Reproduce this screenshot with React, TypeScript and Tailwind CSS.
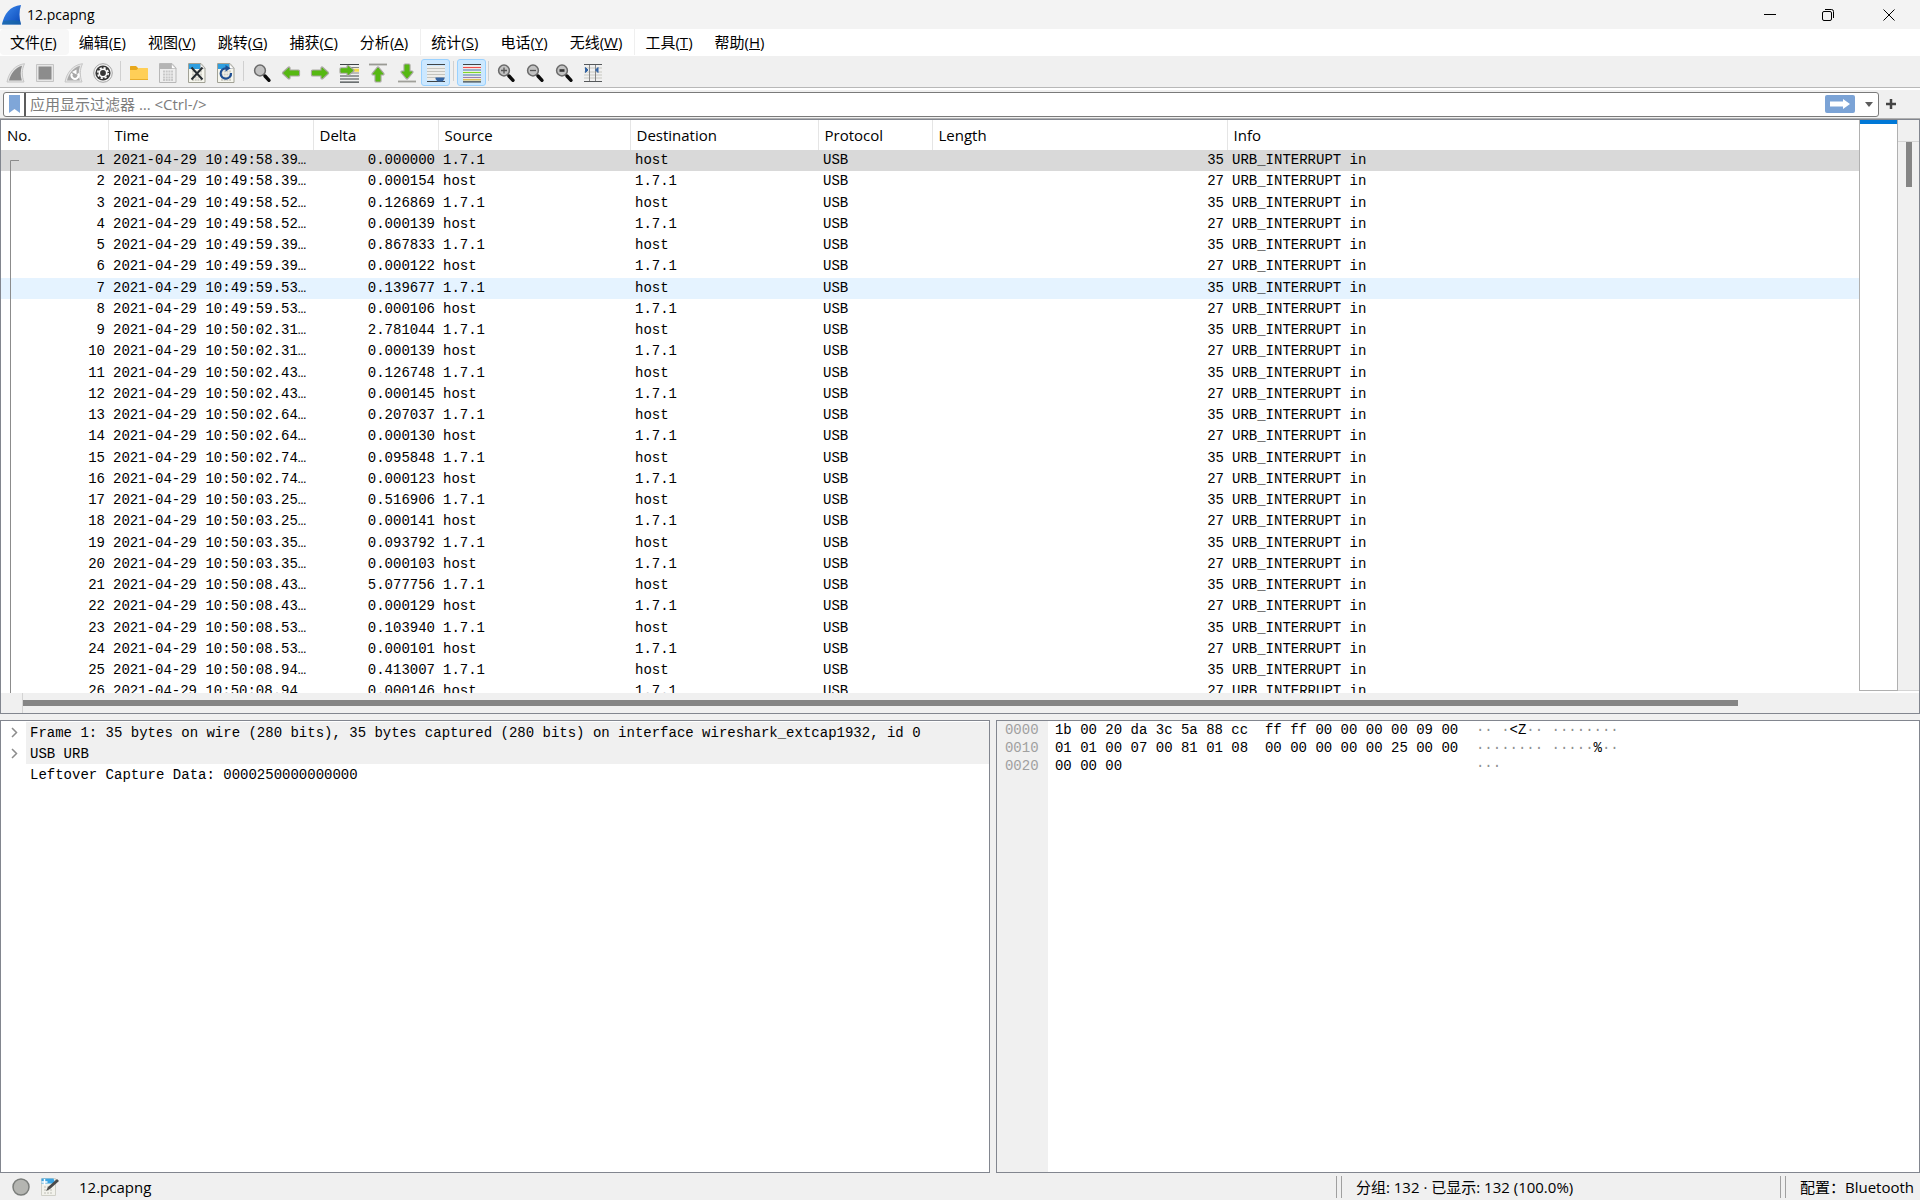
import type { ReactElement, ReactNode } from "react";

type Packet = {
  no: number;
  time: string;
  delta: string;
};

type HexLine = {
  offset: string;
  bytes: string;
  ascii: string;
};

const menuGroups: [string, string][][] = [
  [
    ["文件", "F"],
    ["编辑", "E"],
    ["视图", "V"],
    ["跳转", "G"],
    ["捕获", "C"],
    ["分析", "A"],
  ],
  [
    ["统计", "S"],
    ["电话", "Y"],
    ["无线", "W"],
  ],
  [
    ["工具", "T"],
    ["帮助", "H"],
  ],
];

const packets: Packet[] = [
  { no: 1, time: "10:49:58.39", delta: "0.000000" },
  { no: 2, time: "10:49:58.39", delta: "0.000154" },
  { no: 3, time: "10:49:58.52", delta: "0.126869" },
  { no: 4, time: "10:49:58.52", delta: "0.000139" },
  { no: 5, time: "10:49:59.39", delta: "0.867833" },
  { no: 6, time: "10:49:59.39", delta: "0.000122" },
  { no: 7, time: "10:49:59.53", delta: "0.139677" },
  { no: 8, time: "10:49:59.53", delta: "0.000106" },
  { no: 9, time: "10:50:02.31", delta: "2.781044" },
  { no: 10, time: "10:50:02.31", delta: "0.000139" },
  { no: 11, time: "10:50:02.43", delta: "0.126748" },
  { no: 12, time: "10:50:02.43", delta: "0.000145" },
  { no: 13, time: "10:50:02.64", delta: "0.207037" },
  { no: 14, time: "10:50:02.64", delta: "0.000130" },
  { no: 15, time: "10:50:02.74", delta: "0.095848" },
  { no: 16, time: "10:50:02.74", delta: "0.000123" },
  { no: 17, time: "10:50:03.25", delta: "0.516906" },
  { no: 18, time: "10:50:03.25", delta: "0.000141" },
  { no: 19, time: "10:50:03.35", delta: "0.093792" },
  { no: 20, time: "10:50:03.35", delta: "0.000103" },
  { no: 21, time: "10:50:08.43", delta: "5.077756" },
  { no: 22, time: "10:50:08.43", delta: "0.000129" },
  { no: 23, time: "10:50:08.53", delta: "0.103940" },
  { no: 24, time: "10:50:08.53", delta: "0.000101" },
  { no: 25, time: "10:50:08.94", delta: "0.413007" },
  { no: 26, time: "10:50:08.94", delta: "0.000146" },
];

const columns = ["No.", "Time", "Delta", "Source", "Destination", "Protocol", "Length", "Info"];

const hexLines: HexLine[] = [
  { offset: "0000", bytes: "1b 00 20 da 3c 5a 88 cc  ff ff 00 00 00 00 09 00", ascii: "·· ·<Z·· ········" },
  { offset: "0010", bytes: "01 01 00 07 00 81 01 08  00 00 00 00 00 25 00 00", ascii: "········ ·····%··" },
  { offset: "0020", bytes: "00 00 00", ascii: "···" },
];

function Icon({ children }: { children: ReactNode }): ReactElement {
  return (
    <svg width="20" height="20" viewBox="0 0 20 20" fill="none" aria-hidden="true">
      {children}
    </svg>
  );
}

function Magnifier({ children }: { children?: ReactNode }): ReactElement {
  return (
    <Icon>
      <path d="M11.500 11.500l2 2" stroke="#555" strokeWidth="2" />
      <path d="M13 13l4 4.300" stroke="#0c0c0c" strokeWidth="3.400" strokeLinecap="round" />
      <circle cx="8" cy="7.500" r="5.400" fill="#c2c2c2" stroke="#6a6a6a" strokeWidth="1.500" />
      {children}
    </Icon>
  );
}

function Page({ grey, children }: { grey?: boolean; children?: ReactNode }): ReactElement {
  return (
    <Icon>
      <path d="M1.500.500h12.500l4 4.500v14.500H1.500z" fill={grey ? "#eeeeee" : "#f6f6ee"} stroke={grey ? "#b8b8b8" : "#a2a296"} />
      <path d="M2 1h11.500l1 5H2z" fill={grey ? "#b4b4b4" : "#2f9fe0"} />
      <path d="M13.500 1v4.500h4.500z" fill="#fff" stroke="#aaa" strokeWidth=".6" />
      <path
        d="M5 8.500h10M5 11.500h10M5 14.500h10M5 17h10"
        stroke={grey ? "#c8c8c8" : "#cfcfc6"}
        strokeWidth="2"
        strokeDasharray="2 .7"
      />
      {children}
    </Icon>
  );
}

function ArrowShape({ d }: { d: string }): ReactElement {
  return (
    <>
      <path d={d} fill="#fff" stroke="#a8a8a0" strokeWidth="3.200" strokeLinejoin="round" />
      <path d={d} fill="#56b812" stroke="#56b812" strokeWidth="1" />
    </>
  );
}

const icons: Record<string, ReactElement> = {
  start: (
    <Icon>
      <path d="M1 19C3 9 9 2 18.500.700c-2.800 6-2.800 12-.5 18.300z" fill="#e6e6e6" stroke="#c6c6c6" />
      <path d="M3 17.500C5 10 9.500 4.500 16 2.800c-1.700 5-1.700 10-.2 14.700z" fill="#8a8a8a" />
    </Icon>
  ),
  stop: (
    <Icon>
      <path d="M1.500 1.500h17v17h-17z" fill="#e6e6e6" stroke="#c4c4c4" />
      <path d="M3.500 3.500h13v13h-13z" fill="#8c8c8c" />
    </Icon>
  ),
  restart: (
    <Icon>
      <path d="M1 19C3 9 9 2 18.500.700c-2.800 6-2.800 12-.5 18.300z" fill="#e6e6e6" stroke="#c6c6c6" />
      <path d="M3 17.500C5 10 9.500 4.500 16 2.800c-1.700 5-1.700 10-.2 14.700z" fill="#a8a8a8" />
      <path d="M8 10.500a3.500 3.500 0 1 0 6 0" stroke="#fff" strokeWidth="2" />
      <path d="M12.500 6.500v5L8 9z" fill="#fff" />
    </Icon>
  ),
  options: (
    <Icon>
      <circle cx="10" cy="10" r="9.300" fill="#f4f4f4" stroke="#a4a4a4" />
      <circle cx="10" cy="10" r="7.600" fill="#363636" />
      <circle cx="10" cy="10" r="5.200" stroke="#fff" strokeWidth="1.600" strokeDasharray="2.200 1.880" />
      <circle cx="10" cy="10" r="3.700" stroke="#fff" strokeWidth="1.600" />
    </Icon>
  ),
  open: (
    <Icon>
      <path d="M1 3.500q0-.5.500-.5H7l2 2v4H1z" fill="#e8a81c" />
      <path d="M1 7h6.500l2-2h9q.500 0 .5.500V16q0 1-1 1H2q-1 0-1-1z" fill="#ffcf57" />
      <path d="M1 16.500h18" stroke="#e9ae2c" />
    </Icon>
  ),
  save: <Page grey />,
  close: (
    <Page>
      <path d="M4.500 4.500l11 12M15.500 4.500l-11 12" stroke="#262c30" strokeWidth="2" />
    </Page>
  ),
  reload: (
    <Page>
      <path d="M15 10a5.200 5.200 0 1 1-5-4.700" stroke="#1f4f92" strokeWidth="2.200" />
      <path d="M9.500 2l5 3.300-5 3.500z" fill="#1f4f92" />
    </Page>
  ),
  find: <Magnifier />,
  back: (
    <Icon>
      <ArrowShape d="M2.500 10L8 5v3h9.500v4H8v3z" />
    </Icon>
  ),
  forward: (
    <Icon>
      <ArrowShape d="M17.500 10L12 5v3H2.500v4H12v3z" />
    </Icon>
  ),
  jump: (
    <Icon>
      <path d="M1 1.500h19M1 13h19M1 16h19M1 19.200h19" stroke="#3f4446" strokeWidth="1.200" />
      <path d="M10 4.500h10M10 10h10" stroke="#888" />
      <path d="M12 7.200h8" stroke="#f4dc4c" strokeWidth="3" />
      <ArrowShape d="M14 7.500L9 3.500v2.300H2v3.400h7v2.300z" />
    </Icon>
  ),
  first: (
    <Icon>
      <path d="M1 1.500h18" stroke="#9a9a94" strokeWidth="1.800" />
      <ArrowShape d="M10 5l5 6h-3v7H8v-7H5z" />
    </Icon>
  ),
  last: (
    <Icon>
      <path d="M1 18.500h18" stroke="#a0a09a" strokeWidth="1.800" />
      <ArrowShape d="M10 15l-5-6h3V2h4v7h3z" />
    </Icon>
  ),
  autoscroll: (
    <Icon>
      <path d="M1 3h18v14H1z" fill="#ededea" />
      <path d="M1 1.500h18M1 18.500h18" stroke="#3f4446" strokeWidth="1.200" />
      <path d="M1 5.500h18M1 8.500h18M1 11.500h18M1 14.500h18" stroke="#c4c4be" />
      <path d="M9.500 14.500h9v1.500l-2 2.500h-5l-2-2.500z" fill="#3465a4" />
    </Icon>
  ),
  colorize: (
    <Icon>
      <path d="M1 2.500h18v15H1z" fill="#f4f4f0" />
      <path d="M1 1.500h18M1 18.800h18" stroke="#3f4446" strokeWidth="1.200" />
      <path d="M1 4.500h18" stroke="#ef4b4b" strokeWidth="1.200" />
      <path d="M1 7h18" stroke="#5c83b6" strokeWidth="1.200" />
      <path d="M1 9.500h18" stroke="#7fd629" strokeWidth="1.200" />
      <path d="M1 12h18" stroke="#5c83b6" strokeWidth="1.200" />
      <path d="M1 14.500h18" stroke="#9a7fb0" strokeWidth="1.200" />
      <path d="M1 16.800h18" stroke="#d8b030" strokeWidth="1.200" />
    </Icon>
  ),
  zoomIn: (
    <Magnifier>
      <path d="M5 7.500h6M8 4.500v6" stroke="#555" strokeWidth="1.300" />
    </Magnifier>
  ),
  zoomOut: (
    <Magnifier>
      <path d="M5 7.500h6" stroke="#555" strokeWidth="1.300" />
    </Magnifier>
  ),
  zoomReset: (
    <Magnifier>
      <path d="M5.500 7.500h5" stroke="#333" strokeWidth="2.600" />
    </Magnifier>
  ),
  resize: (
    <Icon>
      <path d="M1 5h18M1 9h18M1 12h18M1 15h18" stroke="#c8c8c0" />
      <path d="M1 1.500h18M1 18.500h18" stroke="#55585a" strokeWidth="1.200" />
      <path d="M6.500 2v16M12.500 2v16" stroke="#888" />
      <path d="M2.500 4.500L5 7 2.500 9.500zM15 4.500L12.500 7 15 9.500z" fill="#3465a4" stroke="#3465a4" />
    </Icon>
  ),
};

function ToolButton({ name, label, active }: { name: string; label: string; active?: boolean }): ReactElement {
  return (
    <button
      type="button"
      aria-label={label}
      className={
        active
          ? "flex h-[27px] w-[29px] items-center justify-center rounded-[3px] border border-[#99d1ff] bg-[#cce8ff]"
          : "flex h-[27px] w-[29px] items-center justify-center"
      }
    >
      {icons[name]}
    </button>
  );
}

function TitleBar(): ReactElement {
  return (
    <header className="flex h-[29px] shrink-0 items-center bg-[#f3f3f3] pl-0.5">
      <svg width="20" height="20" viewBox="0 0 20 20" aria-hidden="true">
        <defs>
          <linearGradient id="fin" x1="0" y1="0" x2="1" y2="1">
            <stop offset="0" stopColor="#3f8df0" />
            <stop offset="1" stopColor="#0a48b8" />
          </linearGradient>
        </defs>
        <path d="M0 19.500C2 9 8 1 19 0c-2 6-2 13 0 19.500z" fill="url(#fin)" />
        <path d="M0 19.500c.5-1.500 1-2.500 1.500-3.500 6-1 11-1 16.500 0l1 3.500z" fill="#1a6a9c" opacity=".6" />
      </svg>
      <h1 className="ml-[5px] flex-1 text-sm">12.pcapng</h1>
      <button type="button" aria-label="Minimize" className="flex h-full w-[58px] items-center justify-center">
        <svg width="12" height="12" viewBox="0 0 12 12">
          <path d="M0 5.500h12" stroke="#000" />
        </svg>
      </button>
      <button type="button" aria-label="Restore" className="flex h-full w-[58px] items-center justify-center">
        <svg width="12" height="12" viewBox="0 0 12 12" fill="none" stroke="#000">
          <rect x=".5" y="2.500" width="9" height="9" rx="1.500" />
          <path d="M3 .5h6.500a2 2 0 0 1 2 2V9" />
        </svg>
      </button>
      <button type="button" aria-label="Close" className="flex h-full w-[63px] items-center justify-center">
        <svg width="12" height="12" viewBox="0 0 12 12" stroke="#000">
          <path d="M.5.5l11 11M11.500.5l-11 11" />
        </svg>
      </button>
    </header>
  );
}

function MenuBar(): ReactElement {
  return (
    <nav className="flex h-[27px] shrink-0 items-start bg-white">
      {menuGroups.map((group, i) => (
        <div key={i} className="flex h-[26px] border-r border-[#efefef] last:border-r-0">
          {group.map(([name, key]) => (
            <button
              key={key}
              type="button"
              className={`pr-3 pb-px pl-[10px] whitespace-nowrap ${key === "F" ? "rounded bg-[#f7f7f7]" : ""}`}
            >
              {name}(<u>{key}</u>)
            </button>
          ))}
        </div>
      ))}
    </nav>
  );
}

function Toolbar(): ReactElement {
  return (
    <div className="flex h-8 shrink-0 items-end border-b border-[#b8b8b8] pb-px pl-px">
      <ToolButton name="start" label="Start capture" />
      <ToolButton name="stop" label="Stop capture" />
      <ToolButton name="restart" label="Restart capture" />
      <ToolButton name="options" label="Capture options" />
      <span className="mx-[3px] h-5 w-px self-center bg-[#d0d0d0]" />
      <ToolButton name="open" label="Open file" />
      <ToolButton name="save" label="Save file" />
      <ToolButton name="close" label="Close file" />
      <ToolButton name="reload" label="Reload file" />
      <span className="mx-[3px] h-5 w-px self-center bg-[#d0d0d0]" />
      <ToolButton name="find" label="Find packet" />
      <ToolButton name="back" label="Previous packet" />
      <ToolButton name="forward" label="Next packet" />
      <ToolButton name="jump" label="Go to packet" />
      <ToolButton name="first" label="First packet" />
      <ToolButton name="last" label="Last packet" />
      <ToolButton name="autoscroll" label="Auto scroll" active />
      <span className="mx-[3px] h-5 w-px self-center bg-[#d0d0d0]" />
      <ToolButton name="colorize" label="Colorize" active />
      <span className="mx-[2px] h-5 w-px self-center bg-[#d0d0d0]" />
      <ToolButton name="zoomIn" label="Zoom in" />
      <ToolButton name="zoomOut" label="Zoom out" />
      <ToolButton name="zoomReset" label="Normal size" />
      <ToolButton name="resize" label="Resize columns" />
    </div>
  );
}

function FilterBar(): ReactElement {
  return (
    <div className="flex h-[31px] shrink-0 items-center border-t-2 border-b border-t-white border-b-[#b0b0b0] pl-[3px]">
      <div className="flex h-[25px] flex-1 items-center rounded-[3px] border border-[#7a7a7a] bg-white">
        <button type="button" aria-label="Bookmarks" className="flex h-full w-[22px] items-center justify-center border-r-2 border-[#5c5c5c]">
          <svg width="11" height="18" viewBox="0 0 11 18">
            <path d="M0 0h11v18l-5.500-4L0 18z" fill="#7fa6d8" />
          </svg>
        </button>
        <input
          type="text"
          aria-label="Display filter"
          placeholder="应用显示过滤器 … <Ctrl-/>"
          className="h-full flex-1 bg-transparent px-1 outline-none placeholder:text-[#7c7c7c]"
        />
        <button type="button" aria-label="Apply filter" className="flex h-[18px] w-[30px] items-center justify-center rounded-[2px] bg-[#7ba3d6]">
          <svg width="20" height="12" viewBox="0 0 20 12">
            <path d="M0 3.500h13V1l7 5-7 5V8.500H0z" fill="#fff" />
          </svg>
        </button>
        <button type="button" aria-label="Recent filters" className="flex h-full w-[23px] items-center justify-center pl-1">
          <svg width="8" height="5" viewBox="0 0 8 5">
            <path d="M0 0h8L4 5z" fill="#5c5c5c" />
          </svg>
        </button>
      </div>
      <button type="button" aria-label="Add filter button" className="flex h-full w-[41px] items-center justify-start pl-[7px]">
        <svg width="10" height="10" viewBox="0 0 10 10">
          <path d="M5 0v10M0 5h10" stroke="#444" strokeWidth="2.500" />
        </svg>
      </button>
    </div>
  );
}

function rowColor(no: number): string {
  if (no === 1) return "bg-[#d9d9d9]";
  if (no === 7) return "bg-[#e5f3ff]";
  return "";
}

function PacketList(): ReactElement {
  return (
    <section className="flex h-[595px] shrink-0 flex-col border border-[#82868f] bg-white">
      <div className="flex min-h-0 flex-1">
        <div className="relative min-w-0 flex-1 overflow-hidden">
          <table className="w-full table-fixed border-collapse font-['Liberation_Mono',monospace] text-sm leading-5">
            <colgroup>
              <col className="w-[107px]" />
              <col className="w-[205px]" />
              <col className="w-[125px]" />
              <col className="w-[192px]" />
              <col className="w-[188px]" />
              <col className="w-[114px]" />
              <col className="w-[295px]" />
              <col />
            </colgroup>
            <thead>
              <tr className="h-[30px]">
                {columns.map((column) => (
                  <th
                    key={column}
                    className="border-r border-[#e5e5e5] p-0 pl-[6px] text-left font-['Open_Sans',sans-serif] text-[15px] font-normal last:border-r-0"
                  >
                    {column}
                  </th>
                ))}
              </tr>
            </thead>
            <tbody className="[&_td]:p-0 [&_td]:pb-px [&_td]:align-top">
              {packets.map(({ no, time, delta }) => {
                const fromDevice = no % 2 === 1;
                return (
                  <tr key={no} className={`h-[21px] whitespace-pre nth-[4n+2]:h-[22px] ${rowColor(no)}`}>
                    <td className="text-right">
                      <span className="pr-[3px]">{no}</span>
                    </td>
                    <td>
                      <span className="pl-[5px]">2021-04-29 {time}…</span>
                    </td>
                    <td className="text-right">
                      <span className="pr-[3px]">{delta}</span>
                    </td>
                    <td>
                      <span className="pl-[5px]">{fromDevice ? "1.7.1" : "host"}</span>
                    </td>
                    <td>
                      <span className="pl-[5px]">{fromDevice ? "host" : "1.7.1"}</span>
                    </td>
                    <td>
                      <span className="pl-[5px]">USB</span>
                    </td>
                    <td className="text-right">
                      <span className="pr-[3px]">{fromDevice ? 35 : 27}</span>
                    </td>
                    <td>
                      <span className="pl-[5px]">URB_INTERRUPT in</span>
                    </td>
                  </tr>
                );
              })}
            </tbody>
          </table>
          {/* conversation bracket over the first column */}
          <svg className="absolute top-[40px] left-[9px] h-full w-[9px]" aria-hidden="true">
            <path d="M9 .5H.5V600" fill="none" stroke="#8c8c8c" />
          </svg>
        </div>
        <div className="mb-0.5 w-[39px] border border-t-0 border-[#b0b0b0]">
          <div className="h-1 bg-[#0078d7]" />
        </div>
        <div className="mb-0.5 w-[21px] border-b border-[#d4d4d4] bg-[#f0f0f0]">
          <div className="h-[22px] border-b border-[#d4d4d4]" />
          <div className="ml-2 h-[45px] w-1.5 bg-[#858585]" />
        </div>
      </div>
      <div className="flex h-5 shrink-0 items-center bg-[#f0f0f0] pr-[181px]">
        <div className="h-full w-[22px] border-r border-[#d4d4d4]" />
        <div className="h-1.5 flex-1 bg-[#858585]" />
      </div>
    </section>
  );
}

function Chevron(): ReactElement {
  return (
    <svg width="7" height="11" viewBox="0 0 7 11" fill="none" aria-hidden="true">
      <path d="M1 1l4.500 4.500L1 10" stroke="#8c8c8c" strokeWidth="1.500" />
    </svg>
  );
}

function PacketDetails(): ReactElement {
  return (
    <section className="flex-[990_1_0%] overflow-hidden border border-[#82868f] bg-white pt-px font-['Liberation_Mono',monospace] text-sm leading-5 whitespace-pre">
      <div className="flex h-[21px] items-center">
        <button type="button" aria-label="Expand frame" className="flex h-full w-[25px] items-center justify-center pl-px">
          <Chevron />
        </button>
        <p className="flex h-full flex-1 items-center bg-[#f0f0f0] pl-1">
          Frame 1: 35 bytes on wire (280 bits), 35 bytes captured (280 bits) on interface wireshark_extcap1932, id 0
        </p>
      </div>
      <div className="flex h-[21px] items-center">
        <button type="button" aria-label="Expand USB URB" className="flex h-full w-[25px] items-center justify-center pl-px">
          <Chevron />
        </button>
        <p className="flex h-full flex-1 items-center bg-[#f0f0f0] pl-1">USB URB</p>
      </div>
      <p className="flex h-[21px] items-center pl-[29px]">Leftover Capture Data: 0000250000000000</p>
    </section>
  );
}

function HexView(): ReactElement {
  return (
    <section className="flex flex-[924_1_0%] border border-[#82868f] bg-white font-['Liberation_Mono',monospace] text-sm leading-[18px] whitespace-pre">
      <div className="w-[51px] bg-[#f0f0f0] pl-2 text-[#a0a0a0]">
        {hexLines.map((line) => (
          <p key={line.offset}>{line.offset}</p>
        ))}
      </div>
      <div className="w-[421px] pl-[7px]">
        {hexLines.map((line) => (
          <p key={line.offset}>{line.bytes}</p>
        ))}
      </div>
      <div className="pl-[7px] text-[#909090]">
        {hexLines.map((line) => (
          <p key={line.offset}>
            {line.ascii.split(/([<Z%]+)/).map((part, i) => (
              <span key={i} className={i % 2 === 1 ? "text-black" : ""}>
                {part}
              </span>
            ))}
          </p>
        ))}
      </div>
    </section>
  );
}

function StatusBar(): ReactElement {
  return (
    <footer className="flex h-[27px] shrink-0 items-center pr-[6px] pl-3">
      <button type="button" aria-label="Expert information">
        <svg width="18" height="18" viewBox="0 0 18 18">
          <circle cx="9" cy="9" r="8" fill="#b4b5b1" stroke="#7a7d7a" strokeWidth="1.500" />
        </svg>
      </button>
      <button type="button" aria-label="Capture comment" className="ml-[11px]">
        <svg width="18" height="18" viewBox="0 0 18 18" fill="none">
          <path d="M.5.500h14v17H.5z" fill="#f2f2ec" stroke="#d0d0c8" />
          <path d="M.5.500h12l2 5H.5z" fill="#3ba4e2" />
          <path d="M3.500 1v6M.5 4h6" stroke="#fff" strokeWidth="1.500" />
          <path d="M3 9h9M3 12h9M3 15h9" stroke="#d0d0c8" strokeWidth="1.500" strokeDasharray="2 1" />
          <path d="M5 13l2-4 9-8 2 2-9 8z" fill="#4a4a4a" />
        </svg>
      </button>
      <span className="ml-[20px] flex-1">12.pcapng</span>
      <div className="flex h-[25px] w-[444px] items-center">
        <span className="mr-[14px] h-[22px] w-[6px] border-x border-[#a0a0a0]" />
        分组: 132 · 已显示: 132 (100.0%)
      </div>
      <div className="flex h-[25px] items-center whitespace-nowrap">
        <span className="mr-[14px] h-[22px] w-[6px] border-x border-[#a0a0a0]" />
        配置：Bluetooth
      </div>
    </footer>
  );
}

export default function App(): ReactElement {
  return (
    <div className="flex h-screen w-full flex-col overflow-hidden bg-[#f0f0f0] font-['Open_Sans','Noto_Sans_CJK_SC',sans-serif] text-[15px] leading-5 text-black">
      <TitleBar />
      <MenuBar />
      <Toolbar />
      <FilterBar />
      <PacketList />
      <main className="mt-1.5 flex min-h-0 flex-1 gap-[6px]">
        <PacketDetails />
        <HexView />
      </main>
      <StatusBar />
    </div>
  );
}
